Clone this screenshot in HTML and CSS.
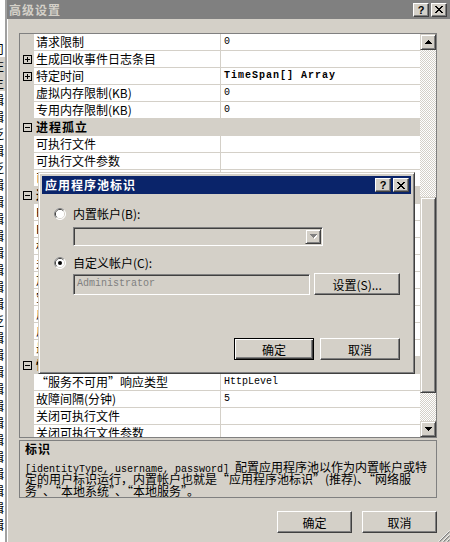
FILE: index.html
```html
<!DOCTYPE html>
<html lang="zh-CN">
<head>
    <meta charset="utf-8"/>
    <title>高级设置</title>
    <link rel="stylesheet" href="styles.css">
</head>
<body>
<div class="behind">
    <div class="behind_line">司</div>
    <div class="behind_line hl">左</div>
    <div class="behind_line hl">主</div>
    <div class="behind_line">辑</div>
    <div class="behind_line">辑</div>
    <div class="behind_line">泛</div>
    <div class="behind_line">辑</div>
    <div class="behind_line">泛</div>
    <div class="behind_line">辑</div>
    <div class="behind_line">辑</div>
    <div class="behind_line">辑</div>
    <div class="behind_line">辑</div>
    <div class="behind_line">辑</div>
    <div class="behind_line">辑</div>
    <div class="behind_line">辑</div>
    <div class="behind_line">辑</div>
    <div class="behind_line">泛</div>
    <div class="behind_line">辑</div>
    <div class="behind_line">辑</div>
    <div class="behind_line">辑</div>
    <div class="behind_line">辑</div>
    <div class="behind_line">辑</div>
    <div class="behind_line">辑</div>
    <div class="behind_line">辑</div>
    <div class="behind_line">辑</div>
    <div class="behind_line">辑</div>
    <div class="behind_line">辑</div>
    <div class="behind_line">辑</div>
    <div class="behind_line">辑</div>
</div>

<div class="window">
    <div class="caption">
        <span class="caption_text">高级设置</span>
        <span class="cap_btn">?</span>
        <span class="cap_btn">
            <svg width="8" height="7" shape-rendering="crispEdges"><path d="M0 0h2v1H0zM6 0h2v1H6zM1 1h2v1H1zM5 1h2v1H5zM2 2h4v1H2zM3 3h2v1H3zM2 4h4v1H2zM1 5h2v1H1zM5 5h2v1H5zM0 6h2v1H0zM6 6h2v1H6z"/></svg>
        </span>
    </div>

    <div class="window_body">
        <div class="grid">
            <div class="grid_rows">
                <div class="row"><span class="row_margin"></span><span class="row_name">请求限制</span><span class="row_value mono">0</span></div>
                <div class="row"><span class="row_margin"><svg class="box" width="9" height="9" shape-rendering="crispEdges"><path d="M0 0h9v9H0zM1 1v7h7V1z" fill-rule="evenodd"/><path d="M2 4h5v1H2zM4 2h1v5H4z"/></svg></span><span class="row_name">生成回收事件日志条目</span><span class="row_value"></span></div>
                <div class="row"><span class="row_margin"><svg class="box" width="9" height="9" shape-rendering="crispEdges"><path d="M0 0h9v9H0zM1 1v7h7V1z" fill-rule="evenodd"/><path d="M2 4h5v1H2zM4 2h1v5H4z"/></svg></span><span class="row_name">特定时间</span><span class="row_value mono bold">TimeSpan[] Array</span></div>
                <div class="row"><span class="row_margin"></span><span class="row_name">虚拟内存限制(KB)</span><span class="row_value mono">0</span></div>
                <div class="row"><span class="row_margin"></span><span class="row_name">专用内存限制(KB)</span><span class="row_value mono">0</span></div>
                <div class="row cat"><span class="row_margin"><svg class="box" width="9" height="9" shape-rendering="crispEdges"><path d="M0 0h9v9H0zM1 1v7h7V1z" fill-rule="evenodd"/><path d="M2 4h5v1H2z"/></svg></span><span class="row_name">进程孤立</span><span class="row_value"></span></div>
                <div class="row"><span class="row_margin"></span><span class="row_name">可执行文件</span><span class="row_value"></span></div>
                <div class="row"><span class="row_margin"></span><span class="row_name">可执行文件参数</span><span class="row_value"></span></div>
                <div class="row"><span class="row_margin"></span><span class="row_name">已启用</span><span class="row_value mono">False</span></div>
                <div class="row cat"><span class="row_margin"><svg class="box" width="9" height="9" shape-rendering="crispEdges"><path d="M0 0h9v9H0zM1 1v7h7V1z" fill-rule="evenodd"/><path d="M2 4h5v1H2z"/></svg></span><span class="row_name">进程模型</span><span class="row_value"></span></div>
                <div class="row"><span class="row_margin"></span><span class="row_name">Ping 间隔(秒)</span><span class="row_value mono">30</span></div>
                <div class="row"><span class="row_margin"></span><span class="row_name">Ping 最大响应时间(秒)</span><span class="row_value mono">90</span></div>
                <div class="row"><span class="row_margin"></span><span class="row_name">标识</span><span class="row_value mono">ApplicationPoolIdentity</span></div>
                <div class="row"><span class="row_margin"></span><span class="row_name">关闭时间限制(秒)</span><span class="row_value mono">90</span></div>
                <div class="row"><span class="row_margin"></span><span class="row_name">加载用户配置文件</span><span class="row_value mono">False</span></div>
                <div class="row"><span class="row_margin"></span><span class="row_name">空闲超时(分钟)</span><span class="row_value mono">20</span></div>
                <div class="row"><span class="row_margin"></span><span class="row_name">启动时间限制(秒)</span><span class="row_value mono">90</span></div>
                <div class="row"><span class="row_margin"></span><span class="row_name">启用 Ping</span><span class="row_value mono">True</span></div>
                <div class="row"><span class="row_margin"></span><span class="row_name">最大工作进程数</span><span class="row_value mono">1</span></div>
                <div class="row cat"><span class="row_margin"><svg class="box" width="9" height="9" shape-rendering="crispEdges"><path d="M0 0h9v9H0zM1 1v7h7V1z" fill-rule="evenodd"/><path d="M2 4h5v1H2z"/></svg></span><span class="row_name">快速故障防护</span><span class="row_value"></span></div>
                <div class="row"><span class="row_margin"></span><span class="row_name">“服务不可用”响应类型</span><span class="row_value mono">HttpLevel</span></div>
                <div class="row"><span class="row_margin"></span><span class="row_name">故障间隔(分钟)</span><span class="row_value mono">5</span></div>
                <div class="row"><span class="row_margin"></span><span class="row_name">关闭可执行文件</span><span class="row_value"></span></div>
                <div class="row"><span class="row_margin"></span><span class="row_name">关闭可执行文件参数</span><span class="row_value"></span></div>
                <div class="row"><span class="row_margin"></span><span class="row_name">最大故障数</span><span class="row_value mono">5</span></div>
            </div>
            <div class="scrollbar">
                <div class="sb_btn"><svg width="7" height="4" shape-rendering="crispEdges"><path d="M3 0h1v1h1v1h1v1h1v1H0V3h1V2h1V1h1z"/></svg></div>
                <div class="sb_track sb_before"></div>
                <div class="sb_thumb"></div>
                <div class="sb_track sb_after"></div>
                <div class="sb_btn"><svg width="7" height="4" shape-rendering="crispEdges"><path d="M0 0h7v1H6v1H5v1H4v1H3V3H2V2H1V1H0z"/></svg></div>
            </div>
        </div>

        <div class="desc">
            <div class="desc_title">标识</div>
            <div class="desc_text">
                <div class="desc_line"><span class="mono">[identityType, username, password] </span>配置应用程序池以作为内置帐户或特</div>
                <div class="desc_line">定的用户标识运行，内置帐户也就是“应用程序池标识”(推荐)、“网络服</div>
                <div class="desc_line">务”、“本地系统”、“本地服务”。</div>
            </div>
        </div>

        <div class="buttons">
            <button class="btn">确定</button>
            <button class="btn">取消</button>
        </div>
    </div>

    <svg class="grip" width="12" height="12">
        <path d="M11.5 1.5L1.5 11.5M11.5 5.5L5.5 11.5M11.5 9.5L9.5 11.5" stroke="#808080" stroke-width="1.2"/>
        <path d="M11.5 0.5L0.5 11.5M11.5 4.5L4.5 11.5M11.5 8.5L8.5 11.5" stroke="#fff" stroke-width="0.8"/>
    </svg>
</div>

<div class="dialog">
    <div class="dlg_caption">
        <span class="dlg_caption_text">应用程序池标识</span>
        <span class="cap_btn">?</span>
        <span class="cap_btn">
            <svg width="8" height="7" shape-rendering="crispEdges"><path d="M0 0h2v1H0zM6 0h2v1H6zM1 1h2v1H1zM5 1h2v1H5zM2 2h4v1H2zM3 3h2v1H3zM2 4h4v1H2zM1 5h2v1H1zM5 5h2v1H5zM0 6h2v1H0zM6 6h2v1H6z"/></svg>
        </span>
    </div>
    <div class="dlg_body">
        <div class="radio_row">
            <svg class="radio" width="12" height="12">
                <circle cx="6" cy="6" r="5.5" fill="#fff" stroke="#fff"/>
                <path d="M2.1 9.9A5.5 5.5 0 0 1 9.9 2.1" stroke="#808080" fill="none"/>
                <circle cx="6" cy="6" r="4.5" fill="none" stroke="#d4d0c8"/>
                <path d="M2.8 9.2A4.5 4.5 0 0 1 9.2 2.8" stroke="#404040" fill="none"/>
                <circle cx="6" cy="6" r="4" fill="#fff"/>
            </svg>
            <span>内置帐户(B):</span>
        </div>
        <div class="combo">
            <span class="combo_btn"><svg width="7" height="5" shape-rendering="crispEdges"><path d="M1 1h7v1H7v1H6v1H5v1H4V4H3V3H2V2H1z" fill="#fff"/><path d="M0 0h7v1H6v1H5v1H4v1H3V3H2V2H1V1H0z" fill="#808080"/></svg></span>
        </div>
        <div class="radio_row second">
            <svg class="radio" width="12" height="12">
                <circle cx="6" cy="6" r="5.5" fill="#fff" stroke="#fff"/>
                <path d="M2.1 9.9A5.5 5.5 0 0 1 9.9 2.1" stroke="#808080" fill="none"/>
                <circle cx="6" cy="6" r="4.5" fill="none" stroke="#d4d0c8"/>
                <path d="M2.8 9.2A4.5 4.5 0 0 1 9.2 2.8" stroke="#404040" fill="none"/>
                <circle cx="6" cy="6" r="4" fill="#fff"/>
                <circle cx="6" cy="6" r="2" fill="#000"/>
            </svg>
            <span>自定义帐户(C):</span>
        </div>
        <div class="account_row">
            <div class="textbox mono">Administrator</div>
            <button class="btn btn_set">设置(S)...</button>
        </div>
        <div class="dlg_buttons">
            <button class="btn btn_dlg default">确定</button>
            <button class="btn btn_dlg">取消</button>
        </div>
    </div>
</div>
</body>
</html>
```

FILE: styles.css
```css
* {
    box-sizing: border-box;
}

body {
    margin: 0;
    width: 450px;
    height: 542px;
    overflow: hidden;
    display: flex;
    position: relative;
    background: #fff;
    font-family: "Noto Sans CJK SC", sans-serif;
    font-size: 12px;
    color: #000;
}

.mono {
    font-family: "Liberation Mono", "Noto Sans CJK SC", monospace;
    font-size: 10px;
}

.bold {
    font-weight: bold;
    letter-spacing: 1px;
}

/* window behind, only its right edge shows */
.behind {
    flex: 0 0 5px;
    width: 5px;
    overflow: hidden;
    padding-top: 40px;
    background: #fff;
}

.behind_line {
    width: 13px;
    height: 17px;
    margin-left: -8px;
    line-height: 17px;
    white-space: nowrap;
}

.behind_line.hl {
    background: #d4d0c8;
}

.window {
    flex: 1;
    position: relative;
    display: flex;
    flex-direction: column;
    background: #d4d0c8;
    border-left: 2px solid #a0a0a0;
}

.caption {
    height: 19px;
    flex: 0 0 19px;
    display: flex;
    align-items: center;
    gap: 2px;
    padding: 0 3px 0 2px;
    background: #808080;
}

.caption_text {
    flex: 1;
    color: #d4d0c8;
    font-weight: bold;
    letter-spacing: 1px;
    line-height: 19px;
}

.cap_btn {
    width: 16px;
    height: 14px;
    display: flex;
    align-items: center;
    justify-content: center;
    background: #d4d0c8;
    border: 1px solid;
    border-color: #fff #404040 #404040 #fff;
    box-shadow: inset -1px -1px #808080;
    font-family: "Liberation Sans", sans-serif;
    font-weight: bold;
    font-size: 11px;
    line-height: 12px;
}

.window_body {
    flex: 1;
    display: flex;
    flex-direction: column;
    padding: 14px 13px 0 12px;
    box-shadow: inset 1px 0 #fff;
}

/* property grid */
.grid {
    height: 405px;
    flex: 0 0 405px;
    display: flex;
    border: 1px solid #808080;
}

.grid_rows {
    flex: 1;
    overflow: hidden;
    background: #d4d0c8;
}

.row {
    display: flex;
    height: 17px;
}

.row_margin {
    flex: 0 0 14px;
    display: flex;
    align-items: center;
    justify-content: center;
    padding-bottom: 1px;
}

.row_name {
    flex: 0 0 187px;
    padding-left: 2px;
    background: #fff;
    border-right: 1px solid #d4d0c8;
    border-bottom: 1px solid #d4d0c8;
    line-height: 16px;
    white-space: nowrap;
    overflow: hidden;
}

.row_value {
    flex: 1;
    padding-left: 3px;
    background: #fff;
    border-bottom: 1px solid #d4d0c8;
    line-height: 16px;
    white-space: nowrap;
    overflow: hidden;
}

.row.cat .row_name,
.row.cat .row_value {
    background: #d4d0c8;
    font-weight: bold;
    letter-spacing: 1px;
}

.scrollbar {
    flex: 0 0 16px;
    display: flex;
    flex-direction: column;
}

.sb_btn,
.sb_thumb {
    background: #d4d0c8;
    border: 1px solid;
    border-color: #d4d0c8 #404040 #404040 #d4d0c8;
    box-shadow: inset 1px 1px #fff, inset -1px -1px #808080;
}

.sb_btn {
    height: 16px;
    flex: 0 0 16px;
    display: flex;
    align-items: center;
    justify-content: center;
}

.sb_track {
    background: repeating-conic-gradient(#fff 0 25%, #d4d0c8 0 50%) 0 0 / 2px 2px;
}

.sb_before {
    flex: 0 0 147px;
}

.sb_thumb {
    flex: 0 0 196px;
}

.sb_after {
    flex: 1;
}

/* description */
.desc {
    height: 58px;
    flex: 0 0 58px;
    margin-top: 2px;
    padding: 1px 0 0 5px;
    border: 1px solid #808080;
}

.desc_title {
    font-weight: bold;
    letter-spacing: 1px;
    line-height: 14px;
}

.desc_text {
    margin-top: 5px;
}

.desc_line {
    height: 12px;
    line-height: 12px;
    white-space: nowrap;
}

.buttons {
    display: flex;
    justify-content: flex-end;
    gap: 10px;
    margin-top: 13px;
}

.btn {
    height: 22px;
    padding: 0;
    background: #d4d0c8;
    border: 1px solid;
    border-color: #fff #404040 #404040 #fff;
    box-shadow: inset -1px -1px #808080;
    font-family: "Noto Sans CJK SC", sans-serif;
    font-size: 12px;
    color: #000;
}

.buttons .btn {
    width: 75px;
}

.grip {
    position: absolute;
    right: 0;
    bottom: 0;
}

/* modal dialog */
.dialog {
    position: absolute;
    left: 38px;
    top: 172px;
    width: 377px;
    height: 202px;
    display: flex;
    flex-direction: column;
    padding: 3px;
    background: #d4d0c8;
    border: 1px solid;
    border-color: #d4d0c8 #404040 #404040 #d4d0c8;
    box-shadow: inset 1px 1px #fff, inset -1px -1px #808080;
}

.dlg_caption {
    height: 18px;
    flex: 0 0 18px;
    display: flex;
    align-items: center;
    gap: 2px;
    padding: 0 2px 0 3px;
    background: #0a246a;
}

.dlg_caption_text {
    flex: 1;
    color: #fff;
    font-weight: bold;
    letter-spacing: 1px;
    line-height: 18px;
}

.dlg_body {
    flex: 1;
    display: flex;
    flex-direction: column;
    padding: 13px 11px 0 12px;
}

.radio_row {
    height: 13px;
    display: flex;
    align-items: center;
    gap: 7px;
    line-height: 13px;
}

.radio_row.second {
    margin-top: 10px;
}

.combo {
    width: 250px;
    height: 19px;
    margin: 7px 0 0 19px;
    display: flex;
    justify-content: flex-end;
    padding: 1px;
    border: 1px solid;
    border-color: #808080 #fff #fff #808080;
    box-shadow: inset 1px 1px #404040, inset -1px -1px #d4d0c8;
}

.combo_btn {
    width: 16px;
    height: 15px;
    display: flex;
    align-items: center;
    justify-content: center;
    background: #d4d0c8;
    border: 1px solid;
    border-color: #d4d0c8 #404040 #404040 #d4d0c8;
    box-shadow: inset 1px 1px #fff, inset -1px -1px #808080;
}

.account_row {
    display: flex;
    align-items: flex-start;
    gap: 4px;
    margin: 4px 0 0 19px;
}

.textbox {
    width: 238px;
    height: 21px;
    margin-top: 1px;
    padding-left: 3px;
    line-height: 17px;
    color: #808080;
    border: 1px solid;
    border-color: #808080 #fff #fff #808080;
    box-shadow: inset 1px 1px #404040, inset -1px -1px #d4d0c8;
}

.btn_set {
    width: 86px;
}

.dlg_buttons {
    display: flex;
    justify-content: flex-end;
    gap: 6px;
    margin-top: 43px;
}

.btn_dlg {
    width: 80px;
}

.btn_dlg.default {
    border-color: #000;
    box-shadow: inset 1px 1px #fff, inset -1px -1px #404040, inset -2px -2px #808080;
}
```
